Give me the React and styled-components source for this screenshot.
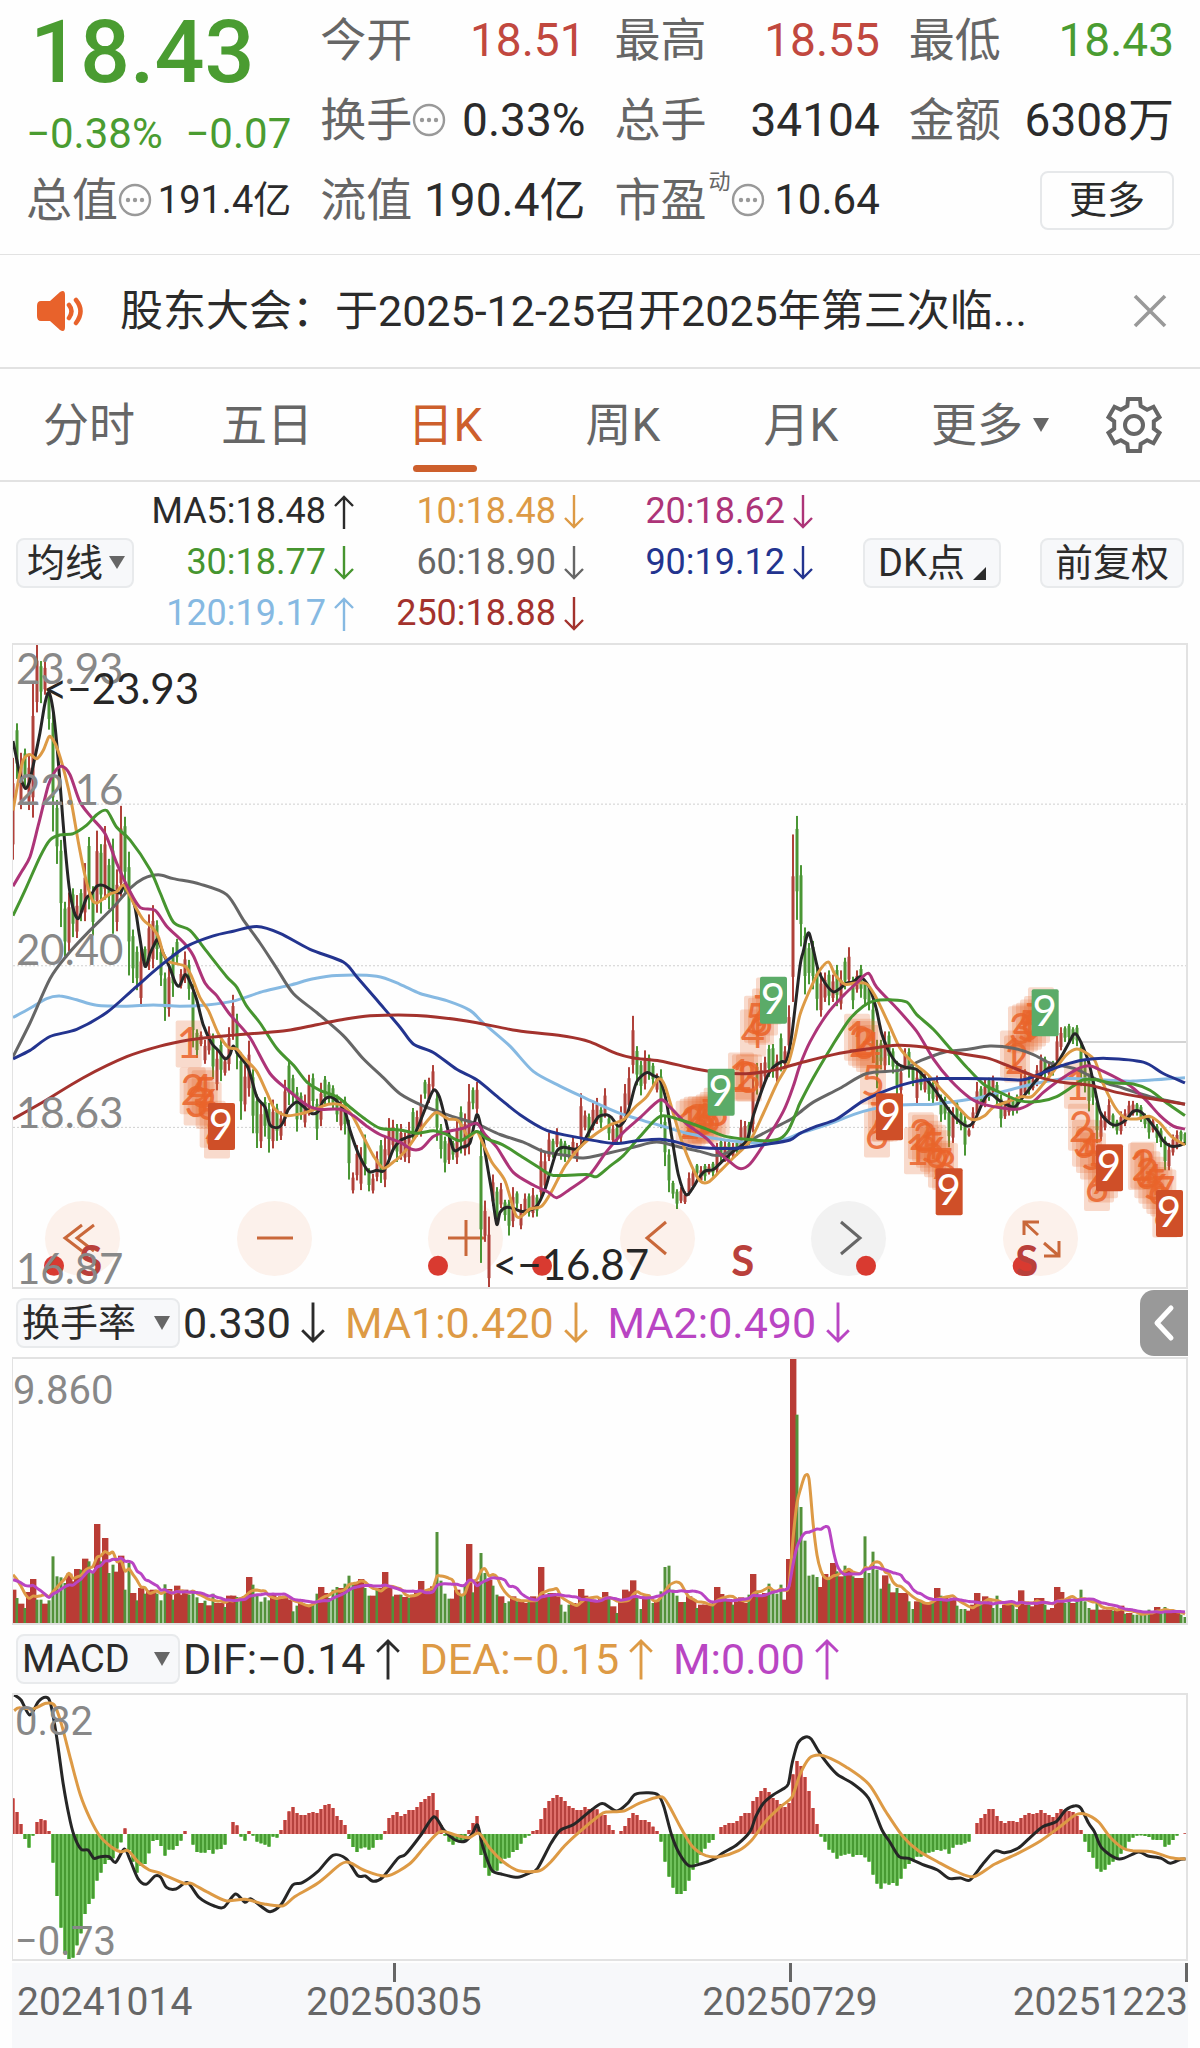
import React from "react";
import styled, { createGlobalStyle } from "styled-components";

const color = {
  text: "#2b2b2b",
  label: "#666666",
  muted: "#888888",
  rise: "#c1483f",
  fall: "#4a9c31",
  accent: "#cd5f2c",
  line: "#e2e2e2",
  black: "#262626",
  orange: "#dd9a45",
  magenta: "#ad3478",
  green: "#46952f",
  gray: "#666666",
  blue: "#23348f",
  sky: "#86b9e2",
  darkRed: "#a3322d",
  violet: "#b945c3",
};

const Global = createGlobalStyle`
  *, *::before, *::after { box-sizing: border-box; }
  body {
    margin: 0;
    background: #fefefe;
    color: ${color.text};
    font-family: Roboto, "Noto Sans CJK SC", sans-serif;
  }
  button, select { font: inherit; color: inherit; }
  dl, dd, dt { margin: 0; }
`;

const Page = styled.main`
  display: flex;
  flex-direction: column;
  min-width: 1000px;
`;

/* ---------- quote summary ---------- */

const Quote = styled.dl`
  display: grid;
  grid-template-columns: repeat(4, 1fr);
  grid-auto-rows: 80px;
  column-gap: 29px;
  padding: 0 26px 14px;
  border-bottom: 1px solid ${color.line};
`;

const Price = styled.div`
  padding: 22px 0 0 4px;
  font-size: 88px;
  font-weight: 500;
  line-height: 60px;
  color: ${color.fall};
`;

const Change = styled.div`
  display: flex;
  justify-content: space-between;
  padding-top: 25px;
  font-size: 42px;
  line-height: 57px;
  color: ${color.fall};
`;

const Stat = styled.div`
  display: flex;
  align-items: center;
  justify-content: space-between;
  line-height: 60px;
  white-space: nowrap;
`;

const StatLabel = styled.dt`
  display: flex;
  align-items: center;
  font-size: 46px;
  color: ${color.label};
`;

const Sup = styled.sup`
  align-self: flex-start;
  padding-left: 2px;
  font-size: 22px;
  line-height: 24px;
`;

const StatValue = styled.dd`
  font-size: ${(p) => p.$size || 46}px;
  color: ${(p) => p.$color || color.text};
`;

const MoreButton = styled.button`
  place-self: center end;
  width: 134px;
  height: 59px;
  padding: 0;
  border: 2px solid #e6e8ea;
  border-radius: 8px;
  background: #fefefe;
  font-size: 38px;
  line-height: 50px;
`;

const Info = () => (
  <svg width="34" height="34" viewBox="0 0 34 34" aria-hidden="true">
    <circle cx="17" cy="17" r="15" fill="none" stroke="#999" strokeWidth="2.4" />
    <circle cx="10" cy="17" r="2.2" fill="#999" />
    <circle cx="17" cy="17" r="2.2" fill="#999" />
    <circle cx="24" cy="17" r="2.2" fill="#999" />
  </svg>
);

/* ---------- notice ---------- */

const Notice = styled.section`
  display: flex;
  align-items: center;
  height: 114px;
  padding: 0 32px 0 36px;
  border-bottom: 2px solid ${color.line};
`;

const NoticeText = styled.a`
  flex: 1;
  padding-left: 34px;
  font-size: 43px;
  line-height: 60px;
  color: ${color.text};
  text-decoration: none;
  white-space: nowrap;
`;

const IconButton = styled.button`
  display: grid;
  place-items: center;
  padding: 0;
  border: 0;
  background: none;
`;

/* ---------- period tabs ---------- */

const Tabs = styled.nav`
  display: grid;
  grid-template-columns: repeat(5, 178fr) 200fr 88fr;
  height: 113px;
  padding-right: 22px;
  border-bottom: 2px solid ${color.line};
`;

const Tab = styled.button`
  display: flex;
  align-items: center;
  justify-content: center;
  gap: 10px;
  padding: 0;
  border: 0;
  background: none;
  font-size: 46px;
  line-height: 60px;
  color: ${(p) => (p.$active ? color.accent : color.label)};
  position: relative;

  &::after {
    content: "";
    display: ${(p) => (p.$active ? "block" : "none")};
    position: absolute;
    bottom: 8px;
    width: 64px;
    height: 7px;
    border-radius: 4px;
    background: ${color.accent};
  }
`;

const Caret = styled.span`
  border: solid transparent;
  border-width: ${(p) => (p.$small ? "13px 8px 0" : "14px 8px 0")};
  border-top-color: #666;
`;

/* ---------- moving average legend ---------- */

const Legend = styled.section`
  display: flex;
  align-items: center;
  height: 161px;
  padding: 0 16px;
`;

const Averages = styled.div`
  display: grid;
  grid-template-columns: 220px 230px 229px;
  grid-auto-rows: 51px;
  flex: 1;
`;

const Reading = styled.span`
  display: flex;
  align-items: center;
  justify-content: flex-end;
  gap: ${(p) => p.$gap || 8}px;
  font-size: ${(p) => p.$size || 36}px;
  line-height: 51px;
  color: ${(p) => p.$color};
  white-space: nowrap;
`;

const Chip = styled.button`
  display: flex;
  align-items: center;
  justify-content: center;
  gap: 8px;
  width: ${(p) => p.$width}px;
  height: 50px;
  margin-left: ${(p) => p.$space || 0}px;
  padding: 0;
  border: 2px solid #e8eaec;
  border-radius: 8px;
  background: #f7f8fa;
  font-size: 38px;
  line-height: 46px;
  white-space: nowrap;
`;

const Corner = styled.span`
  align-self: flex-end;
  margin-bottom: 6px;
  border-bottom: 13px solid ${color.text};
  border-left: 13px solid transparent;
`;

const SelectBox = styled.label`
  display: flex;
  align-items: center;
  justify-content: space-between;
  width: ${(p) => p.$width}px;
  height: 50px;
  padding: ${(p) => (p.$small ? "0 7px 0 9px" : "0 8px 0 4px")};
  border: 2px solid #e8eaec;
  border-radius: 8px;
  background: #f7f8fa;
`;

const Select = styled.select`
  appearance: none;
  padding: 0;
  border: 0;
  background: none;
  font-size: 38px;
  line-height: 46px;
`;

const Picker = ({ label, name, width, small }) => (
  <SelectBox $width={width} $small={small}>
    <Select aria-label={name} defaultValue={label}>
      <option>{label}</option>
    </Select>
    <Caret $small={small} />
  </SelectBox>
);

const Arrow = ({ up, size = 36 }) => (
  <svg width={size / 2 + 2} height={size} viewBox="0 0 20 36" aria-hidden="true">
    <g
      fill="none"
      stroke="currentColor"
      strokeWidth="2.4"
      transform={up ? undefined : "rotate(180 10 18)"}
    >
      <path d="M10 35V3M1 12L10 3l9 9" />
    </g>
  </svg>
);

/* ---------- chart panels ---------- */

const Panel = styled.section`
  position: relative;
  margin: 0 12px;
  border: solid ${color.line};
  border-width: 2px 2px 2px 1px;
`;

const Drawing = styled.svg`
  display: block;
  position: relative;
  width: 100%;
  height: auto;
  pointer-events: none;
`;

const AxisText = styled.text`
  font-family: Lato, "Open Sans", sans-serif;
  font-size: 42px;
  fill: ${(p) => p.$fill || color.muted};
  font-weight: ${(p) => p.$weight || 400};
`;

const ScaleText = styled.text`
  font-size: 40px;
  fill: ${color.muted};
`;

const Controls = styled.div`
  position: absolute;
  bottom: 11px;
  left: 32px;
  right: 108px;
  display: flex;
  justify-content: space-between;
`;

const RoundButton = styled.button`
  display: grid;
  place-items: center;
  width: 75px;
  height: 75px;
  padding: 0;
  border: 0;
  border-radius: 50%;
  background: ${(p) => (p.$plain ? "#f2f2f2" : "#fcf1eb")};
`;

const PanelHeader = styled.header`
  display: flex;
  align-items: center;
  gap: 3px;
  height: 68px;
  padding-left: 16px;
`;

const HeaderValues = styled.div`
  display: flex;
  flex: 1;
  gap: 20px;
`;

const Drawer = styled.button`
  display: grid;
  place-items: center;
  width: 48px;
  height: 66px;
  margin-right: 12px;
  padding: 0;
  border: 0;
  border-radius: 14px 0 0 14px;
  background: #999;
`;

const TimeAxis = styled.div`
  display: grid;
  grid-template-columns: 184fr 396fr 396fr 200fr;
  height: 85px;
  margin: 2px 12px 0;
  background: #f7f8fa;
`;

const Tick = styled.time`
  display: flex;
  flex-direction: column;
  align-items: ${(p) => p.$align || "center"};
  padding-left: ${(p) => (p.$align === "flex-start" ? 5 : 0)}px;
  font-size: 39px;
  line-height: 40px;
  color: ${color.label};
  white-space: nowrap;

  &::before {
    content: "";
    width: 3px;
    height: 19px;
    background: ${(p) => (p.$align === "flex-start" ? "transparent" : "#666")};
  }
`;

/* ---------- chart data ---------- */

// high-low and direction of every trading day
const candles = `280-522r 198-330g 268-402r 258-350g 270-404r 100-422r 8-172r 50-150g 45-130r 120-213g
160-455g 380-532g 475-682g 622-752g 600-740r 590-706g 606-708r 592-668g 530-668r 468-640g
585-702g 453-648r 485-650g 442-617r 520-640g 472-698g 545-692r 394-610r 420-600g 503-797g
688-815g 728-832g 728-872r 728-775g 652-784r 630-780r 666-760g 730-822g 790-905g 770-895r
730-848g 710-770g 782-828r 740-815r 760-855g 818-968g 925-993g 930-965r 950-1007r 918-985r
935-1043g 970-1070r 950-1048g 990-1035r 920-1023r 843-950r 888-1020g 980-1140g 1010-1120r 952-1085r
1020-1172g 1080-1207g 1100-1207r 1086-1180g 1100-1218g 1092-1208r 1102-1190g 1120-1188r 1045-1155r 998-1105g
1033-1100g 1062-1168g 1075-1140g 1080-1158r 1033-1130r 1030-1120g 1090-1188g 1052-1155r 1036-1105g 1050-1100g
1058-1115g 1080-1145g 1090-1165r 1085-1175g 1140-1282g 1265-1315r 1200-1284r 1205-1307r 1175-1272g 1255-1310g
1268-1315r 1215-1286r 1188-1290g 1180-1300r 1136-1240r 1140-1210r 1150-1240g 1150-1235r 1170-1240r 1145-1243r
1112-1190g 1118-1180r 1080-1180r 1045-1090g 1040-1100r 1010-1070r 1075-1190g 1150-1232g 1180-1265g 1180-1245r
1190-1235g 1140-1245r 1108-1220g 1125-1225r 1055-1222r 1063-1115g 1050-1125r 1190-1480g 1332-1430r 1370-1542r
1270-1345r 1300-1385g 1290-1350r 1330-1380g 1330-1415g 1300-1395r 1310-1350g 1340-1400r 1315-1365r 1315-1370g
1302-1372r 1318-1370g 1208-1330r 1215-1310r 1170-1238r 1185-1230g 1160-1205r 1185-1235g 1190-1240g 1200-1235g
1180-1230r 1195-1240r 1077-1200r 1118-1165r 1125-1190g 1100-1165r 1088-1150r 1110-1160g 1065-1135r 1130-1188g
1150-1195r 1155-1195g 1108-1195r 1055-1145r 1015-1120r 893-1030r 965-1058g 1000-1082g 975-1068r 985-1045g
1005-1058g 1030-1075r 1020-1160g 1130-1250g 1210-1312g 1285-1327g 1305-1352g 1300-1338r 1310-1340r 1265-1320r
1255-1305r 1245-1275g 1250-1290r 1245-1285g 1245-1270r 1240-1275g 1195-1270r 1185-1245g 1190-1240r 1190-1235g
1195-1230r 1190-1225g 1140-1215r 1143-1190r 1145-1200g 1040-1170r 1005-1080g 1005-1075r 990-1045r 962-1038g
960-1040g 985-1050r 935-1025g 965-1015r 868-980r 462-860r 418-665g 535-728g 683-842g 720-818g
715-830g 780-880g 790-895r 790-860r 785-868g 795-860r 772-870g 785-878r 755-830g 730-820r
800-877g 785-838r 772-850g 810-870g 820-880g 860-1005g 950-1065g 950-1020g 930-1025r 930-1010g
970-1030g 1000-1080g 1010-1080r 970-1020r 970-1040g 1010-1060g 1020-1100r 1020-1070g 1030-1075r 1035-1095g
1050-1105g 1035-1095r 1080-1145g 1085-1140g 1110-1205g 1110-1195r 1095-1150g 1120-1165g 1130-1225g 1160-1180r
1110-1160r 1050-1140r 1060-1110g 1045-1110r 1040-1095g 1035-1080r 1050-1110g 1080-1158g 1095-1138r 1075-1130r
1090-1130g 1080-1125g 1030-1095r 1020-1085r 1035-1080g 1035-1070r 1010-1060r 985-1040r 990-1040g 1005-1035r
1000-1035g 935-1010r 920-975r 918-955g 912-955g 920-960g 915-965g 955-1060g 1000-1075g 1030-1120g
1040-1105g 1085-1195g 1125-1190r 1120-1165r 1090-1150r 1125-1160g 1140-1175g 1120-1175r 1115-1155r 1095-1140r
1095-1130r 1100-1130g 1105-1145g 1125-1160g 1130-1185g 1135-1170r 1150-1195g 1160-1205g 1180-1260g 1195-1260r
1175-1225r 1165-1210r 1165-1195g 1170-1200g`;

const averageLines = [
  [color.sky, "39,897 90,875 140,852 180,846 230,855 290,868 380,870 460,867 540,870 620,867 700,858 790,835 870,820 940,805 1010,797 1130,799 1200,818 1260,840 1340,857 1410,880 1450,910 1530,965 1600,1025 1680,1060 1760,1090 1850,1122 1930,1142 2000,1158 2060,1172 2150,1185 2260,1195 2350,1187 2400,1172 2480,1152 2590,1120 2700,1105 2800,1103 2920,1090 3000,1075 3100,1055 3200,1042 3300,1045 3400,1048 3555,1040"],
  [color.gray, "39,990 90,910 150,805 200,750 270,690 340,635 390,590 430,567 475,558 520,567 600,580 680,605 730,665 780,720 830,780 880,840 950,885 1030,940 1090,995 1150,1040 1200,1078 1270,1107 1350,1130 1430,1150 1500,1175 1570,1193 1630,1215 1700,1225 1750,1231 1820,1220 1900,1205 1970,1193 2040,1205 2100,1215 2150,1225 2200,1212 2260,1185 2320,1160 2370,1140 2400,1122 2440,1098 2520,1065 2600,1030 2700,1022 2760,1000 2830,980 2900,973 2970,965 3040,970 3100,985 3150,1005 3230,1020 3300,1048 3370,1065 3450,1085 3555,1103"],
  [color.black, "39,240 60,320 75,352 87,340 99,300 120,220 135,150 147,125 160,170 172,260 183,370 195,490 208,590 222,645 235,662 247,640 260,612 275,603 290,585 310,583 330,592 350,600 362,600 375,580 390,600 405,635 418,700 435,775 450,745 462,725 473,712 490,745 510,780 525,812 538,822 555,795 570,812 590,855 610,915 635,958 655,975 675,995 690,985 700,965 715,985 745,1018 770,1085 795,1110 810,1152 835,1158 850,1145 865,1115 890,1098 910,1108 935,1125 955,1120 970,1095 990,1086 1010,1095 1035,1120 1050,1165 1075,1220 1105,1262 1130,1260 1150,1262 1165,1240 1180,1210 1200,1190 1220,1182 1245,1172 1275,1115 1300,1070 1318,1085 1335,1135 1360,1210 1385,1205 1410,1195 1430,1128 1445,1165 1460,1240 1475,1310 1490,1388 1500,1360 1520,1348 1545,1352 1570,1358 1610,1345 1635,1305 1650,1265 1670,1215 1690,1205 1725,1210 1745,1200 1770,1165 1795,1133 1820,1128 1835,1135 1855,1155 1875,1140 1890,1105 1910,1050 1940,1028 1960,1035 1980,1045 2000,1100 2015,1180 2035,1270 2058,1318 2080,1300 2095,1280 2115,1262 2140,1258 2165,1240 2200,1215 2240,1190 2260,1130 2300,1040 2320,1015 2345,1002 2360,998 2375,940 2400,775 2410,740 2420,705 2428,697 2440,735 2455,785 2475,815 2500,836 2520,828 2540,815 2560,812 2580,800 2600,815 2615,840 2630,880 2645,935 2665,975 2690,1005 2715,1015 2750,1020 2775,1040 2810,1075 2850,1120 2880,1145 2905,1155 2925,1140 2950,1095 2970,1078 3000,1095 3040,1110 3060,1095 3085,1070 3110,1045 3140,1020 3165,1010 3180,995 3205,960 3220,938 3230,938 3245,960 3265,1000 3280,1050 3300,1120 3325,1145 3345,1153 3375,1142 3400,1120 3420,1120 3440,1135 3470,1165 3490,1190 3510,1202 3535,1202 3555,1195"],
  [color.orange, "39,405 55,335 70,285 90,272 110,282 130,262 147,230 160,238 175,265 195,320 215,390 235,480 255,560 275,615 290,625 310,615 330,603 350,598 370,582 385,600 405,632 430,665 455,682 475,705 490,745 510,765 555,775 575,800 600,850 625,880 655,935 685,968 710,972 735,995 770,1025 800,1075 825,1115 860,1130 900,1126 935,1118 985,1103 1025,1105 1055,1128 1090,1180 1120,1225 1150,1255 1180,1240 1200,1228 1225,1205 1260,1165 1290,1135 1310,1123 1345,1138 1375,1142 1405,1180 1430,1168 1445,1190 1475,1240 1515,1285 1550,1370 1590,1352 1625,1345 1655,1310 1695,1250 1740,1205 1790,1172 1830,1152 1870,1140 1905,1110 1940,1085 1975,1043 1995,1060 2020,1125 2045,1190 2075,1250 2100,1285 2125,1288 2160,1262 2200,1230 2250,1190 2290,1125 2330,1055 2365,1005 2385,945 2400,890 2425,840 2455,790 2485,765 2505,795 2535,818 2565,815 2600,817 2625,845 2665,910 2700,970 2740,1005 2780,1030 2820,1065 2850,1090 2880,1115 2905,1135 2925,1140 2955,1130 2980,1110 3030,1095 3065,1085 3095,1085 3130,1055 3165,1020 3200,985 3230,972 3260,982 3285,1000 3310,1055 3345,1110 3375,1135 3410,1138 3450,1132 3480,1148 3515,1180 3555,1200"],
  [color.magenta, "39,585 65,550 90,515 115,440 145,345 165,312 185,300 210,320 240,385 275,422 315,460 350,530 385,590 420,635 465,642 500,680 550,718 580,750 615,815 650,845 690,890 750,945 810,1030 865,1070 920,1105 955,1115 1020,1115 1060,1130 1100,1155 1140,1175 1200,1193 1235,1210 1265,1208 1300,1180 1340,1168 1390,1160 1430,1148 1455,1175 1490,1205 1540,1265 1600,1295 1645,1312 1670,1325 1710,1305 1770,1270 1820,1215 1870,1170 1920,1135 1980,1093 2010,1110 2060,1150 2120,1185 2160,1220 2190,1240 2220,1256 2250,1245 2290,1200 2350,1120 2380,1060 2400,1010 2430,955 2480,890 2530,845 2570,815 2605,792 2630,825 2690,875 2750,930 2800,995 2850,1045 2910,1088 2960,1105 3050,1115 3095,1100 3130,1075 3180,1045 3230,1020 3270,1012 3310,1025 3360,1045 3400,1065 3440,1095 3480,1130 3520,1155 3555,1162"],
  [color.green, "39,655 75,595 120,515 150,475 180,463 220,460 260,440 290,415 320,405 350,445 390,475 450,545 480,600 520,670 570,690 620,740 680,800 710,825 740,870 780,910 830,970 880,1010 920,1050 960,1070 1010,1085 1050,1110 1090,1135 1140,1160 1200,1164 1250,1172 1300,1166 1340,1175 1380,1190 1430,1168 1460,1185 1510,1200 1560,1225 1620,1255 1660,1272 1760,1270 1790,1275 1830,1250 1870,1225 1920,1180 1980,1132 2040,1140 2120,1162 2180,1180 2250,1187 2300,1190 2340,1185 2365,1165 2390,1120 2400,1100 2440,1040 2500,960 2550,900 2590,870 2620,858 2670,855 2720,860 2750,890 2800,925 2850,970 2900,1015 2950,1055 3000,1075 3060,1095 3120,1096 3170,1085 3220,1060 3250,1045 3290,1045 3330,1052 3400,1055 3450,1070 3500,1100 3555,1130"],
  [color.blue, "39,995 90,975 150,942 230,925 320,885 400,830 480,775 560,728 640,703 700,692 770,681 840,697 930,735 1030,765 1070,800 1130,855 1200,920 1240,960 1300,980 1370,1020 1430,1045 1500,1090 1560,1128 1640,1165 1740,1183 1840,1196 1910,1190 1980,1186 2030,1193 2090,1205 2200,1208 2300,1198 2370,1188 2400,1172 2450,1155 2510,1138 2590,1095 2660,1070 2740,1050 2820,1042 2900,1042 3000,1043 3070,1045 3130,1028 3190,1010 3250,998 3320,994 3430,1003 3490,1030 3555,1052"],
  [color.darkRed, "39,1138 120,1102 250,1040 380,990 480,965 570,950 640,943 760,935 860,928 950,914 1020,903 1110,893 1250,892 1400,905 1550,928 1700,942 1770,955 1850,983 1900,993 1980,1000 2080,1018 2160,1028 2250,1030 2320,1022 2400,1005 2500,985 2600,972 2690,963 2770,967 2860,980 2960,993 3020,1010 3100,1035 3180,1050 3270,1058 3350,1075 3440,1088 3555,1103"],
];

// sequence counts: digit 1-8 as faded tags, left edge and top
const countTags = [
  "527,904 539,1015 551,1042 563,1015 575,1022 587,1050 599,1095 612,1120",
  "2027,1095 2039,1090 2051,1085 2063,1084 2075,1085 2087,1080 2099,1074 2111,1064",
  "2184,980 2196,984 2208,985 2220,878 2232,845 2244,850 2256,828 2268,802",
  "2532,888 2544,900 2556,905 2568,915 2580,992 2592,1118 2604,1080 2616,1080",
  "2712,1158 2724,1122 2736,1128 2748,1142 2760,1152 2772,1165 2784,1190 2796,1195",
  "3000,928 3012,940 3024,870 3036,866 3048,862 3060,854 3072,846 3084,825",
  "3192,1002 3204,1102 3216,1140 3228,1155 3240,1170 3252,1245 3264,1225 3276,1215",
  "3384,1195 3391,1192 3403,1215 3415,1228 3427,1240 3439,1252 3451,1258 3457,1308",
];

const nineTags = [
  [624, 1100, 0], [2123, 1019, 1], [2280, 800, 1], [2628, 1077, 0],
  [2807, 1255, 0], [3095, 830, 1], [3288, 1198, 0], [3468, 1307, 0],
];

// turnover bar tops, "r" up day, "g" down day
const turnover = `930r 955g 972r 985g 937r 898r 960g 960g 972r 962g 830g 890g 893g 910g 882r 905r 868r 870g 837r 845g
880g 733r 845g 775r 880g 855g 876r 828r 930g 850g 940r 962g 925r 942g 932r 930r 942g 962g 914g 928r
960g 918r 945r 930r 945g 933g 953g 970r 963g 977r 942g 970r 970r 982g 948r 948r 952g 952g 950r 892r
915g 945g 966g 953g 962g 945r 957g 950r 948r 960r 995g 978g 970r 975r 975r 972g 942g 922r 940r 955g
930g 922g 925r 912g 888g 912g 910r 898r 925g 948g 948r 925g 925r 877r 925r 950g 945r 945g 952r 955g
945r 932r 904r 932r 935r 920r 757g 903g 942g 957g 957r 930r 945g 915g 793r 938g 905r 820g 880g 900r
918g 945g 950r 970g 965g 950r 965g 965r 970r 965g 950r 960g 862r 945r 940g 940r 950r 975g 996g 975g
970r 972r 928r 948r 960g 960r 965r 955r 937r 950g 980r 1000g 960r 930r 935r 902r 955g 988g 950r 945g
970g 965r 935g 862g 858g 930g 948g 967r 967g 950r 960r 985g 975r 975r 975r 970g 922r 943r 955g 958r
975g 965r 953r 970r 945g 883r 933g 945r 940r 912g 930g 942g 915g 960r 838r 232r 405g 682g 783g 888g
885g 892g 922r 883r 900g 850r 875g 890r 858g 870r 890g 895r 895r 770g 880g 816g 870g 927g 887r 912g
938r 925g 940r 940r 965g 988g 965r 965g 968r 970r 965g 925r 948g 955r 960g 955r 978g 988g 988g 993r
975r 940r 965g 950r 965r 985g 948g 985g 975r 972r 975g 988g 932r 975r 975g 980r 955r 955r 975g 990r
985r 922r 937r 970g 955g 970r 965g 930g 965g 985g 990r 968g 990r 990r 990r 993g 990r 978r 1002g 1000r
1005g 1005g 1005g 1000g 990g 995r 982r 1000g 982g 1000r 1000r 1000r 1005g 1012g`;

const macdBars = `475 516 552 597 623 587 546 537 541 573 668 768 863 940 957 953 916 880 822 792 776 722 698 672
660 655 626 607 565 630 665 698 678 672 640 603 600 618 647 629 629 618 602 573 582 614 636 638 638 630 641 628 627
614 582 546 556 590 602 573 587 605 610 614 620 590 593 570 540 514 501 519 525 525 519 516 519 507 495 492 504 528
540 555 597 621 636 625 622 629 623 600 599 573 534 525 516 528 522 510 510 501 486 477 468 459 510 555 587 605 614
605 605 600 570 549 528 645 683 707 698 692 670 656 653 636 630 611 593 587 573 570 537 504 483 474 465 471 483 498
504 510 510 501 507 504 508 525 525 555 570 582 573 558 534 519 525 540 540 546 560 573 605 665 710 743 762 762 753
722 689 670 645 626 608 600 582 561 555 549 549 543 528 519 519 483 471 453 444 456 474 480 492 501 489 403 363 378
411 453 504 552 590 605 629 638 656 647 644 641 650 645 645 652 665 704 731 746 730 734 729 737 716 686 672 662 650
650 641 638 635 630 632 628 641 623 614 614 610 605 582 549 534 522 507 507 528 543 549 543 543 546 534 525 519 522
519 510 519 525 531 519 507 510 513 516 528 570 605 636 653 686 695 689 674 665 655 641 626 605 593 587 586 588 591
599 600 600 620 614 600 587 582 580`;

const dif = "37,165 55,180 78,225 100,185 120,172 132,190 148,290 165,430 180,525 193,585 212,628 230,630 245,655 262,650 285,650 302,667 325,627 340,660 360,715 382,733 405,708 420,712 435,742 460,747 490,728 520,772 560,798 585,802 615,762 640,787 655,776 680,797 706,815 735,793 765,735 790,728 830,695 870,646 905,657 935,707 955,708 975,724 1000,712 1040,655 1060,643 1100,585 1134,530 1160,570 1190,600 1217,603 1235,580 1248,555 1262,620 1285,690 1310,702 1353,712 1385,698 1405,685 1440,610 1465,570 1500,553 1540,515 1568,492 1580,492 1612,513 1640,490 1660,463 1695,458 1720,465 1735,500 1755,585 1775,640 1800,677 1830,672 1870,655 1890,638 1925,615 1960,575 1975,530 1995,490 2020,465 2045,448 2060,432 2070,370 2085,310 2105,291 2120,297 2140,335 2165,375 2190,405 2230,432 2270,475 2305,570 2325,605 2350,650 2375,655 2410,673 2450,690 2480,715 2510,714 2535,720 2570,670 2600,633 2625,638 2660,625 2690,595 2725,560 2760,545 2785,510 2810,497 2825,505 2845,550 2860,575 2880,625 2925,657 2975,636 3000,648 3035,655 3058,670 3085,658 3098,657";
const dea = "37,212 50,203 85,207 120,190 142,195 160,250 185,360 210,465 235,535 262,590 290,620 315,635 335,632 360,665 390,690 415,698 480,730 500,730 540,755 590,782 640,778 690,792 740,797 770,770 830,730 890,673 915,668 950,690 1010,708 1070,672 1110,620 1150,575 1190,585 1225,593 1252,580 1280,625 1315,665 1355,692 1410,692 1440,665 1475,618 1510,580 1568,525 1585,516 1630,513 1670,490 1725,470 1745,490 1780,565 1810,620 1845,647 1880,650 1930,632 1965,600 2000,545 2040,500 2070,470 2090,405 2115,355 2140,345 2170,355 2210,380 2270,432 2315,515 2360,590 2400,632 2450,665 2500,695 2545,710 2600,672 2660,640 2720,602 2770,560 2810,525 2835,522 2870,545 2900,590 2935,625 2960,632 3010,635 3060,653 3098,657";

/* ---------- chart geometry ---------- */

const STEP = 4;
const PRICE_H = 642;
const SUB_H = 264;
const priceX = (v) => v / 3 - 13;
const priceY = (v) => v / 2.376 - 5;
const macdX = (v) => v / 2.6133 - 13;
const macdY = (v) => (v - 165) / 3;
const turnoverY = (v) => (v - 238) / 3;

const parse = (text, fx, fy) =>
  text.split(" ").map((pair) => {
    const [x, y] = pair.split(",").map(Number);
    return [fx(x), fy(y)];
  });

const smooth = (pts) =>
  pts.reduce((d, p, i) => {
    if (i === 0) return `M${p[0].toFixed(1)} ${p[1].toFixed(1)}`;
    const a = pts[i - 2] || pts[i - 1];
    const b = pts[i - 1];
    const c = pts[i + 1] || p;
    const nums = [
      b[0] + (p[0] - a[0]) / 7, b[1] + (p[1] - a[1]) / 7,
      p[0] - (c[0] - b[0]) / 7, p[1] - (c[1] - b[1]) / 7,
      p[0], p[1],
    ].map((n) => n.toFixed(1));
    return `${d}C${nums.join(" ")}`;
  }, "");

const days = candles.split(/\s+/).map((s) => {
  const [, high, low, dir] = s.match(/(\d+)-(\d+)([rg])/);
  return { high: priceY(+high), low: priceY(+low), up: dir === "r" };
});

const bars = turnover.split(/\s+/).map((s) => ({
  y: turnoverY(parseInt(s, 10)),
  up: s.endsWith("r"),
}));

const rolling = (n) => {
  const seed = [915, 915, 915, 915, 915, 880, 876, 872, 868].map(turnoverY);
  const all = [...seed, ...bars.map((b) => b.y)];
  return bars.map((_, i) => {
    const end = i + seed.length + 1;
    const part = all.slice(Math.max(0, end - n), end);
    return [i * STEP, part.reduce((s, v) => s + v, 0) / part.length];
  });
};

const Candles = () =>
  days.map((d, i) => {
    const mid = (d.low - d.high) * 0.25;
    const fill = d.up ? "#b0413a" : "#4a9635";
    return (
      <g key={i} fill={fill}>
        <rect x={i * STEP - 1} y={d.high} width="2" height={d.low - d.high} />
        <rect
          x={i * STEP - 1.5}
          y={d.high + (d.up ? mid : mid / 2)}
          width="3"
          height={(d.low - d.high) * 0.6}
        />
      </g>
    );
  });

const PriceDrawing = () => (
  <Drawing viewBox={`0 0 1173 ${PRICE_H}`} role="img" aria-label="日K">
    {[390, 774, 1158].map((v) => (
      <line key={v} x1="0" x2="1173" y1={priceY(v)} y2={priceY(v)} stroke="#cfcfcf" strokeDasharray="2 2" />
    ))}
    <line x1="1069" x2="1173" y1={priceY(955)} y2={priceY(955)} stroke="#c4c4c4" strokeWidth="1.5" />
    <Candles />
    {countTags.map((row, r) =>
      parse(row, priceX, priceY).map(([x, y], i) => (
        <g key={`${r}-${i}`}>
          <rect x={x} y={y} width="26" height="47" rx="2" fill="#e8672c" opacity="0.24" />
          <AxisText x={x + 13} y={y + 38} textAnchor="middle" $fill="#ec632a" opacity="0.85">
            {i + 1}
          </AxisText>
        </g>
      ))
    )}
    {averageLines.map(([stroke, pts]) => (
      <path key={stroke + pts.length} d={smooth(parse(pts, priceX, priceY))} fill="none" stroke={stroke} strokeWidth="3" strokeLinejoin="round" />
    ))}
    {nineTags.map(([x, y, up]) => (
      <g key={x}>
        <rect x={priceX(x)} y={priceY(y)} width="27" height="47" rx="2" fill={up ? "#5bab68" : "#cf4f28"} />
        <AxisText x={priceX(x) + 13} y={priceY(y) + 37} textAnchor="middle" $fill="#fff">9</AxisText>
      </g>
    ))}
    {[162, 1314, 1626, 2598, 3068].map((x) => (
      <circle key={x} cx={priceX(x)} cy={priceY(1487)} r="10" fill="#d93a30" />
    ))}
    {[272, 2228, 3080].map((x) => (
      <AxisText key={x} x={priceX(x)} y={priceY(1510)} textAnchor="middle" $weight={700} $fill="#b9403b">S</AxisText>
    ))}
    {[["23.93", 104], ["22.16", 391], ["20.40", 773], ["18.63", 1160], ["16.87", 1530]].map(([t, y]) => (
      <AxisText key={t} x="3" y={priceY(y)}>{t}</AxisText>
    ))}
    <AxisText x="30" y={priceY(152)} $fill={color.black}>&lt;−23.93</AxisText>
    <AxisText x="480" y={priceY(1520)} $fill={color.black}>&lt;−16.87</AxisText>
  </Drawing>
);

const TurnoverDrawing = () => (
  <Drawing viewBox={`0 0 1173 ${SUB_H}`} role="img" aria-label="换手率">
    {bars.map((b, i) => (
      <rect
        key={i}
        x={i * STEP - (b.up ? 3 : 1.5)}
        y={b.y}
        width={b.up ? 6.4 : 3}
        height={SUB_H - b.y}
        fill={b.up ? "#b93c35" : "#53913a"}
      />
    ))}
    <path d={smooth(rolling(5))} fill="none" stroke={color.orange} strokeWidth="3" />
    <path d={smooth(rolling(10))} fill="none" stroke={color.violet} strokeWidth="3" />
    <ScaleText x="0" y="45">9.860</ScaleText>
  </Drawing>
);

const MacdDrawing = () => {
  const zero = macdY(582);
  return (
    <Drawing viewBox={`0 0 1173 ${SUB_H}`} role="img" aria-label="MACD">
      {macdBars.split(/\s+/).map(Number).map((v, i) => {
        const up = v < 582;
        const y = Math.min(macdY(v), zero);
        const height = Math.abs(macdY(v) - zero);
        return (
          <g key={i}>
            <rect x={i * STEP - 2} y={y} width="4" height={height} fill={up ? "#df706b" : "#70c25c"} />
            <rect x={i * STEP - 1} y={y} width="2" height={height} fill={up ? "#b5423e" : "#479a32"} />
          </g>
        );
      })}
      <path d={smooth(parse(dif, macdX, macdY))} fill="none" stroke={color.black} strokeWidth="3" />
      <path d={smooth(parse(dea, macdX, macdY))} fill="none" stroke={color.orange} strokeWidth="3" />
      <ScaleText x="2" y="40">0.82</ScaleText>
      <ScaleText x="2" y="260">−0.73</ScaleText>
    </Drawing>
  );
};

const controls = [
  ["最早", "M37 24L20 37l17 13M49 24L32 37l17 13"],
  ["缩小", "M20 37h36"],
  ["放大", "M20 37h36M38 19v36"],
  ["向左", "M46 21L27 37l19 16"],
  ["向右", "M30 21l19 16-19 16"],
  ["全屏", "M21 34V21h15M21 21l14 13M56 40v15H41M56 55L41 42"],
];

const GearIcon = () => {
  const tooth = [[-20, -57], [-18, -78], [18, -78], [20, -57]];
  const points = [0, 1, 2, 3, 4, 5].flatMap((k) => {
    const a = (k * Math.PI) / 3;
    return tooth.map(([x, y]) => [
      (x * Math.cos(a) - y * Math.sin(a)).toFixed(1),
      (x * Math.sin(a) + y * Math.cos(a)).toFixed(1),
    ].join(","));
  });
  return (
    <svg width="58" height="58" viewBox="-87 -87 174 174" fill="none" stroke="#666" strokeWidth="12" aria-hidden="true">
      <polygon points={points.join(" ")} />
      <circle r="27" />
    </svg>
  );
};

const averages = [
  ["MA5:18.48", true, color.text], ["10:18.48", false, color.orange], ["20:18.62", false, color.magenta],
  ["30:18.77", false, color.green], ["60:18.90", false, color.gray], ["90:19.12", false, color.blue],
  ["120:19.17", true, color.sky], ["250:18.88", false, color.darkRed],
];

const Values = ({ items }) => (
  <HeaderValues>
    {items.map(([text, up, c]) => (
      <Reading key={text} $size={43} $gap={10} $color={c}>
        {text}
        <Arrow up={up} size={44} />
      </Reading>
    ))}
  </HeaderValues>
);

export default function App() {
  return (
    <Page>
      <Global />
      <Quote>
        <Price>18.43</Price>
        <Stat><StatLabel>今开</StatLabel><StatValue $color={color.rise}>18.51</StatValue></Stat>
        <Stat><StatLabel>最高</StatLabel><StatValue $color={color.rise}>18.55</StatValue></Stat>
        <Stat><StatLabel>最低</StatLabel><StatValue $color={color.fall}>18.43</StatValue></Stat>
        <Change><span>−0.38%</span><span>−0.07</span></Change>
        <Stat><StatLabel>换手<Info /></StatLabel><StatValue>0.33%</StatValue></Stat>
        <Stat><StatLabel>总手</StatLabel><StatValue>34104</StatValue></Stat>
        <Stat><StatLabel>金额</StatLabel><StatValue>6308万</StatValue></Stat>
        <Stat><StatLabel>总值<Info /></StatLabel><StatValue $size={38}>191.4亿</StatValue></Stat>
        <Stat><StatLabel>流值</StatLabel><StatValue>190.4亿</StatValue></Stat>
        <Stat><StatLabel>市盈<Sup>动</Sup><Info /></StatLabel><StatValue $size={42}>10.64</StatValue></Stat>
        <MoreButton type="button">更多</MoreButton>
      </Quote>

      <Notice>
        <svg width="50" height="42" viewBox="0 0 50 42" aria-hidden="true">
          <path d="M5 11h9L24 2q5-3 5 3v32q0 6-5 3L14 31H5q-4 0-4-5V16q0-5 4-5z" fill="#e8622b" />
          <path d="M33 15q5 6 0 13M40 10q9 11 0 23" fill="none" stroke="#e8622b" strokeWidth="4.5" strokeLinecap="round" />
        </svg>
        <NoticeText href="#notice">股东大会：于2025-12-25召开2025年第三次临...</NoticeText>
        <IconButton type="button" aria-label="关闭">
          <svg width="36" height="36" viewBox="0 0 36 36" stroke="#999" strokeWidth="3.6" aria-hidden="true">
            <path d="M3 3l30 30M33 3L3 33" />
          </svg>
        </IconButton>
      </Notice>

      <Tabs>
        <Tab type="button">分时</Tab>
        <Tab type="button">五日</Tab>
        <Tab type="button" $active>日K</Tab>
        <Tab type="button">周K</Tab>
        <Tab type="button">月K</Tab>
        <Tab type="button">更多<Caret /></Tab>
        <IconButton type="button" aria-label="设置"><GearIcon /></IconButton>
      </Tabs>

      <Legend>
        <Picker label="均线" name="指标" width={118} small />
        <Averages>
          {averages.map(([text, up, c]) => (
            <Reading key={text} $color={c}>{text}<Arrow up={up} /></Reading>
          ))}
        </Averages>
        <Chip type="button" $width={138}>DK点<Corner /></Chip>
        <Chip type="button" $width={144} $space={39}>前复权</Chip>
      </Legend>

      <Panel>
        <Controls>
          {controls.map(([name, d]) => (
            <RoundButton key={name} type="button" aria-label={name} $plain={name === "向右"}>
              <svg width="75" height="75" viewBox="0 0 75 75" fill="none" stroke={name === "向右" ? "#666" : "#c9683a"} strokeWidth="3" aria-hidden="true">
                <path d={d} />
              </svg>
            </RoundButton>
          ))}
        </Controls>
        <PriceDrawing />
      </Panel>

      <PanelHeader>
        <Picker label="换手率" name="副图一" width={164} />
        <Values items={[["0.330", false, color.text], ["MA1:0.420", false, color.orange], ["MA2:0.490", false, color.violet]]} />
        <Drawer type="button" aria-label="展开">
          <svg width="24" height="40" viewBox="0 0 24 40" fill="none" stroke="#fff" strokeWidth="5" strokeLinecap="round" strokeLinejoin="round" aria-hidden="true">
            <path d="M19 5L5 20l14 15" />
          </svg>
        </Drawer>
      </PanelHeader>
      <Panel><TurnoverDrawing /></Panel>

      <PanelHeader>
        <Picker label="MACD" name="副图二" width={164} />
        <Values items={[["DIF:−0.14", true, color.text], ["DEA:−0.15", true, color.orange], ["M:0.00", true, color.violet]]} />
      </PanelHeader>
      <Panel><MacdDrawing /></Panel>

      <TimeAxis>
        <Tick $align="flex-start">20241014</Tick>
        <Tick>20250305</Tick>
        <Tick>20250729</Tick>
        <Tick $align="flex-end">20251223</Tick>
      </TimeAxis>
    </Page>
  );
}
